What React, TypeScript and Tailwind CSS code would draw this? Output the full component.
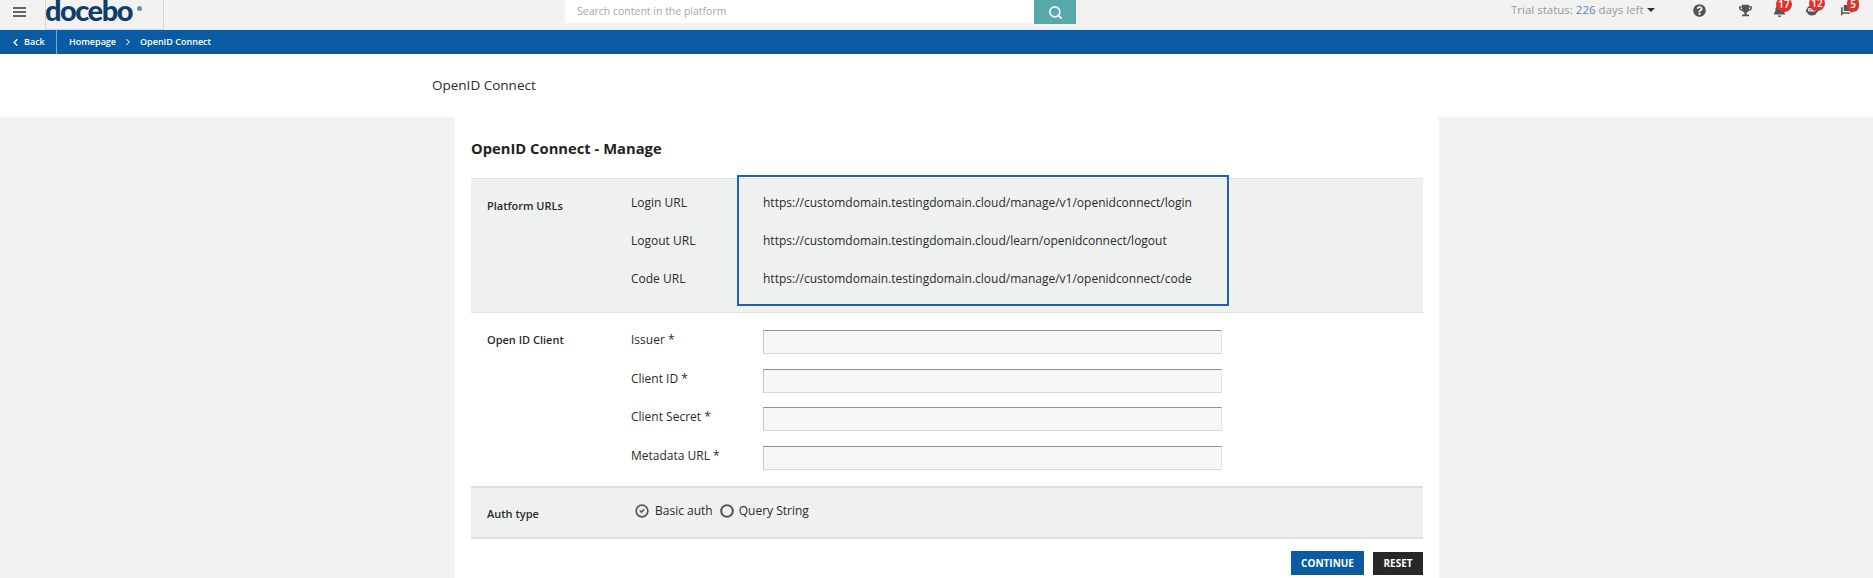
import { ChevronLeft, ChevronRight, Search, Circle, CircleCheck } from "lucide-react";
import { FaQuestionCircle, FaTrophy, FaBell } from "react-icons/fa";
import { MdQuestionAnswer } from "react-icons/md";

function Badge({ value, className }: { value: string; className: string }) {
  return (
    <span className={`absolute top-[-7px] flex h-[15px] items-start justify-center rounded-full bg-[#e0322b] pt-[1px] text-[10px] leading-[13px] font-semibold text-white ${className}`}>
      {value}
    </span>
  );
}

function CoachIcon() {
  return (
    <svg viewBox="0 0 14 14" className="h-[14px] w-[14px]" fill="#555">
      <path d="M7 2.5C4 2.5 2.2 4 2 6.2H1v3h1.1C2.6 11.2 4.4 12.5 7 12.5s4.4-1.3 4.9-3.3H13v-3h-1C11.8 4 10 2.5 7 2.5Z" />
      <rect x="2.8" y="5" width="8.4" height="3.4" rx="1.7" fill="#f2f2f2" />
      <circle cx="5" cy="6.7" r="0.8" fill="#555" />
      <circle cx="9" cy="6.7" r="0.8" fill="#555" />
    </svg>
  );
}

function Header() {
  return (
    <div className="flex h-[30px] items-stretch bg-[#f2f2f2]">
      <div className="flex w-[565px] items-start">
        <div className="flex w-[45px] flex-col gap-[2px] pl-[13px] pt-[7px]">
          <span className="h-[2px] w-[13px] bg-[#666]" />
          <span className="h-[2px] w-[13px] bg-[#666]" />
          <span className="h-[2px] w-[13px] bg-[#666]" />
        </div>
        <div className="flex h-[30px] w-[119px] items-start overflow-hidden border-x border-b border-[#d4d4d4]">
          <span className="mt-[-8px] ml-[-1px] font-['Lato'] text-[29px] leading-[36px] font-black tracking-[-1.5px] text-[#0e3f6b]">docebo</span>
          <span className="mt-[6px] ml-[5px] h-[5px] w-[5px] rounded-full bg-[#6d8aa5]" />
        </div>
      </div>
      <div className="flex h-[24px] w-[511px] items-stretch">
        <div className="flex h-[23px] flex-1 items-center bg-white pl-[12px] text-[10.5px] text-[#a8a8a8]">Search content in the platform</div>
        <div className="flex w-[42px] items-center justify-center bg-[#55a9ab]">
          <Search size={15} strokeWidth={2.5} className="text-white" />
        </div>
      </div>
      <div className="flex flex-1 items-start pl-[435px] pt-[2px]">
        <div className="flex h-[16px] w-[182px] items-center gap-[3px] text-[11.5px] text-[#9a9a9a]">
          <span>
            Trial status: <span className="text-[#5f83b8]">226</span> days left
          </span>
          <span className="h-0 w-0 border-x-[4px] border-t-[4px] border-x-transparent border-t-[#333]" />
        </div>
        <div className="flex items-center pt-[1px]">
          <FaQuestionCircle className="h-[13px] w-[13px] text-[#555]" />
          <div className="ml-[33px] text-[#555]">
            <FaTrophy className="h-[13px] w-[13px]" />
          </div>
          <div className="relative ml-[21px] text-[#555]">
            <FaBell className="h-[13px] w-[13px]" />
            <Badge value="17" className="left-[3px] w-[16px]" />
          </div>
          <div className="relative ml-[19px]">
            <CoachIcon />
            <Badge value="12" className="left-[4px] w-[16px]" />
          </div>
          <div className="relative ml-[21px] text-[#555]">
            <MdQuestionAnswer className="h-[13px] w-[13px] -scale-x-100" />
            <Badge value="5" className="left-[7px] w-[12px]" />
          </div>
        </div>
      </div>
    </div>
  );
}

function Crumbs() {
  return (
    <div className="flex h-[24px] items-center bg-[#0a5ba3] text-[9px] font-semibold text-white">
      <div className="flex h-full w-[57px] items-center border-r border-[#7ea9cf] pl-[10px]">
        <ChevronLeft size={11} strokeWidth={3} />
        <span className="ml-[3px]">Back</span>
      </div>
      <span className="ml-[12px]">Homepage</span>
      <ChevronRight size={10} strokeWidth={2.5} className="mx-[7px]" />
      <span>OpenID Connect</span>
    </div>
  );
}

const urls = [
  ["Login URL", "https://customdomain.testingdomain.cloud/manage/v1/openidconnect/login"],
  ["Logout URL", "https://customdomain.testingdomain.cloud/learn/openidconnect/logout"],
  ["Code URL", "https://customdomain.testingdomain.cloud/manage/v1/openidconnect/code"],
];

const fields = ["Issuer *", "Client ID *", "Client Secret *", "Metadata URL *"];

export default function App() {
  return (
    <div className="h-[578px] overflow-hidden bg-[#f2f2f2] font-['Open_Sans',sans-serif] text-[#2b2b2b]">
      <Header />
      <Crumbs />
      <div className="flex h-[63px] items-center bg-white pb-[1px] pl-[432px] text-[13.5px] text-[#2b2b2b]">OpenID Connect</div>
      <div className="ml-[455px] h-[461px] w-[984px] bg-white px-[16px]">
        <h2 className="h-[61px] pt-[21px] text-[14.75px] leading-[20px] font-bold text-[#222]">OpenID Connect - Manage</h2>

        {/* Platform URLs */}
        <div className="relative h-[135px] border-y border-[#dfe1e0] bg-[#eff0f0]">
          <div className="grid grid-cols-[144px_132px_1fr] px-[16px] pt-[15px] text-[12px]">
            <div className="pt-[4px] text-[11px] font-semibold">Platform URLs</div>
            <div className="flex flex-col gap-[21px]">
              {urls.map(([label]) => (
                <div key={label} className="h-[17px] leading-[17px]">{label}</div>
              ))}
            </div>
            <div className="flex flex-col gap-[21px]">
              {urls.map(([label, url]) => (
                <div key={label} className="h-[17px] leading-[17px]">{url}</div>
              ))}
            </div>
          </div>
          <div className="absolute top-[-4px] left-[266px] h-[131px] w-[492px] border-2 border-[#1f5fbf]" />
        </div>

        {/* Open ID Client */}
        <div className="grid h-[173px] grid-cols-[144px_132px_459px] px-[16px] pt-[17px] text-[12px]">
          <div className="pt-[2px] text-[11px] font-semibold">Open ID Client</div>
          <div className="col-span-2 flex flex-col gap-[14.5px]">
            {fields.map((f) => (
              <div key={f} className="grid grid-cols-[132px_459px]">
                <div className="leading-[20px]">{f}</div>
                <div className="h-[24px] border border-t-[#8f8f8f] border-r-[#e3e3e3] border-b-[#d8d8d8] border-l-[#c4c4c4] bg-[#f7f7f7]" />
              </div>
            ))}
          </div>
        </div>

        {/* Auth type */}
        <div className="flex h-[53px] items-start border-t-2 border-b-2 border-[#dfe1e0] bg-[#eff0f0] px-[16px]">
          <div className="w-[148px] pt-[18px] text-[11px] font-semibold">Auth type</div>
          <div className="flex items-center pt-[14px] text-[12px]">
            <CircleCheck size={14} strokeWidth={2.75} className="text-[#555]" />
            <span className="ml-[6px]">Basic auth</span>
            <Circle size={14} strokeWidth={3.5} className="ml-[7px] text-[#555]" />
            <span className="ml-[5px]">Query String</span>
          </div>
        </div>

        {/* Buttons */}
        <div className="flex items-start justify-end gap-[9px] pt-[12px]">
          <button className="h-[24px] w-[73px] bg-[#0a5ba3] text-[10px] font-bold text-white">CONTINUE</button>
          <button className="mt-[1px] h-[23px] w-[50px] bg-[#282828] text-[10px] font-bold text-white">RESET</button>
        </div>
      </div>
    </div>
  );
}
